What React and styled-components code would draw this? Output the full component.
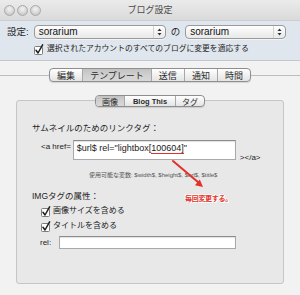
import React from 'react';
import styled, { createGlobalStyle } from 'styled-components';

const Global = createGlobalStyle`
  html, body { margin: 0; padding: 0; background: #f1f1f1; }
  body { font-family: "Liberation Sans", "Noto Sans CJK JP", sans-serif; }
`;

const Window = styled.div`
  position: relative;
  width: 300px;
  height: 295px;
  overflow: hidden;
  display: flex;
  flex-direction: column;
  background: #f2f2f2;
  font-family: "Liberation Sans", "Noto Sans CJK JP", sans-serif;
  color: #1b1b1b;
`;

const TitleBar = styled.div`
  height: 20px;
  flex: none;
  display: grid;
  grid-template-columns: 1fr auto 1fr;
  align-items: center;
  background: linear-gradient(#ebebeb, #dadada);
`;

const Lights = styled.div`
  display: flex;
  gap: 2px;
  padding-left: 4px;
`;

const Light = styled.span`
  width: 11px;
  height: 11px;
  box-sizing: border-box;
  border-radius: 50%;
  border: 1px solid #a9a9a9;
  background: radial-gradient(circle at 50% 35%, #f4f4f4 0%, #d6d6d6 55%, #bcbcbc 100%);
`;

const Title = styled.div`
  font-size: 9px;
  line-height: 12px;
  color: #4c4c4c;
`;

const Settings = styled.div`
  height: 41px;
  flex: none;
  box-sizing: border-box;
  background: #dfe6ee;
  border-top: 1px solid #c9ced4;
  border-bottom: 1px solid #c3c8ce;
  padding-top: 4px;
`;

const SettingRow = styled.div`
  display: flex;
  align-items: center;
  gap: 5px;
  padding-left: 7px;
  height: 14px;
`;

const Label = styled.span`
  font-size: ${p => p.size || 9.5}px;
  line-height: 12px;
  color: ${p => p.color || '#2a2a2a'};
  white-space: nowrap;
`;

const Select = styled.div`
  width: ${p => p.w}px;
  height: 14px;
  box-sizing: border-box;
  display: flex;
  align-items: center;
  border: 1px solid #9a9a9a;
  border-radius: 4px;
  background: linear-gradient(#ffffff, #f3f3f3 50%, #e9e9e9);
  box-shadow: 0 1px 0 rgba(255,255,255,0.6);
`;

const SelectText = styled.span`
  flex: 1;
  padding-left: 4px;
  font-size: 10px;
  line-height: 12px;
  color: #111;
`;

const Stepper = styled.span`
  width: 11px;
  height: 100%;
  display: flex;
  align-items: center;
  justify-content: center;
  border-left: 1px solid #d2d2d2;
`;

const CheckRow = styled.label`
  display: flex;
  align-items: center;
  gap: ${p => p.gap || 3}px;
  padding-left: ${p => p.indent}px;
  margin-top: ${p => p.top || 0}px;
  height: 12px;
`;

const CheckText = styled.span`
  font-size: ${p => p.size || 8}px;
  line-height: 12px;
  color: #222;
  white-space: nowrap;
`;

const Content = styled.div`
  flex: 1;
  display: flex;
  flex-direction: column;
`;

const TabLine = styled.div`
  display: flex;
  align-items: center;
  margin-top: 7px;
  height: 14px;
`;

const Rule = styled.div`
  flex: 1;
  height: 1px;
  background: #bdbdbd;
`;

const Segmented = styled.div`
  display: flex;
  height: ${p => p.h}px;
  box-sizing: border-box;
  border: 1px solid #8e8e8e;
  border-radius: 4px;
  overflow: hidden;
  background: linear-gradient(#ffffff, #f1f1f1 50%, #e4e4e4);
  box-shadow: 0 1px 1px rgba(0,0,0,0.12);
`;

const Segment = styled.div`
  display: flex;
  align-items: center;
  justify-content: center;
  padding: 0 ${p => p.pad}px;
  font-size: ${p => p.size}px;
  font-weight: ${p => (p.bold ? 700 : 400)};
  color: #2b2b2b;
  white-space: nowrap;
  background: ${p => (p.active ? 'linear-gradient(#c2c2c2, #d0d0d0 50%, #d8d8d8)' : 'transparent')};
  & + & { border-left: 1px solid #a8a8a8; }
`;

const Group = styled.div`
  margin: 18px 16px 11px;
  flex: 1;
  box-sizing: border-box;
  border: 1px solid #c6c6c6;
  border-radius: 3px;
  background: #e8e8e8;
  display: flex;
  flex-direction: column;
`;

const SubTabs = styled(Segmented)`
  align-self: center;
  margin-top: -6px;
`;

const Body = styled.div`
  display: flex;
  flex-direction: column;
  padding-left: 15px;
`;

const Heading = styled.div`
  font-size: 8.5px;
  line-height: 12px;
  color: #1f1f1f;
  margin-top: ${p => p.top}px;
  white-space: nowrap;
`;

const HrefRow = styled.div`
  display: flex;
  align-items: flex-start;
  margin-top: 6px;
  padding-left: 9px;
`;

const Code = styled.span`
  font-size: 8px;
  line-height: 12px;
  color: #222;
  margin-top: ${p => p.top || 0}px;
  white-space: nowrap;
`;

const Field = styled.div`
  width: ${p => p.w}px;
  height: ${p => p.h}px;
  box-sizing: border-box;
  margin: 0 ${p => p.right || 0}px 0 ${p => p.left || 0}px;
  background: #fff;
  border: 1px solid #a9a9a9;
  border-top-color: #8a8a8a;
  box-shadow: inset 0 1px 1px rgba(0,0,0,0.12);
  font-size: 9px;
  line-height: 11px;
  padding: 2px 3px;
  color: #1a1a1a;
  white-space: nowrap;
`;

const Marked = styled.span`
  border-bottom: 1.5px solid #e2302a;
`;

const Hint = styled.div`
  font-size: 6px;
  line-height: 8px;
  color: #555;
  margin-top: 7px;
  padding-left: 57px;
  white-space: nowrap;
`;

const RelRow = styled.div`
  display: flex;
  align-items: center;
  margin-top: 4px;
  padding-left: 8px;
`;

const Arrow = styled.svg`
  position: absolute;
  left: 170px;
  top: 157px;
`;

const Note = styled.div`
  position: absolute;
  left: 185px;
  top: 194px;
  font-size: 7px;
  line-height: 10px;
  font-weight: 700;
  letter-spacing: -0.3px;
  color: #e2352c;
  text-shadow: 1px 0 0 #fff, -1px 0 0 #fff, 0 1px 0 #fff, 0 -1px 0 #fff, 1px 1px 0 #fff, -1px -1px 0 #fff, 0 0 2px rgba(0,0,0,0.3);
  white-space: nowrap;
`;

const StepIcon = () => (
  <svg width="5" height="8" viewBox="0 0 5 8">
    <path d="M2.5 0.5 L4.5 3 L0.5 3 Z" fill="#333" />
    <path d="M2.5 7.5 L4.5 5 L0.5 5 Z" fill="#333" />
  </svg>
);

const CheckBox = () => (
  <svg width="10" height="11" viewBox="0 0 10 11">
    <rect x="0.5" y="2.5" width="8" height="8" rx="1" fill="#fff" stroke="#7d7d7d" />
    <path d="M2 6.3 L4 9 L8.6 0.8" fill="none" stroke="#1e1e1e" strokeWidth="1.5" strokeLinecap="round" strokeLinejoin="round" />
  </svg>
);

const tabs = ['編集', 'テンプレート', '送信', '通知', '時間'];
const subTabs = ['画像', 'Blog This', 'タグ'];

export default function App() {
  return (
    <Window>
      <Global />
      <TitleBar>
        <Lights>
          <Light />
          <Light />
          <Light />
        </Lights>
        <Title>ブログ設定</Title>
        <span />
      </TitleBar>

      <Settings>
        <SettingRow>
          <Label>設定:</Label>
          <Select w={132}>
            <SelectText>sorarium</SelectText>
            <Stepper><StepIcon /></Stepper>
          </Select>
          <Label size={9.5}>の</Label>
          <Select w={101}>
            <SelectText>sorarium</SelectText>
            <Stepper><StepIcon /></Stepper>
          </Select>
        </SettingRow>
        <CheckRow indent={34} top={4} gap={3}>
          <CheckBox />
          <CheckText size={7.8}>選択されたアカウントのすべてのブログに変更を適応する</CheckText>
        </CheckRow>
      </Settings>

      <Content>
        <TabLine>
          <Rule />
          <Segmented h={14}>
            {tabs.map(t => (
              <Segment key={t} pad={7} size={9} active={t === 'テンプレート'}>{t}</Segment>
            ))}
          </Segmented>
          <Rule />
        </TabLine>

        <Group>
          <SubTabs h={12}>
            {subTabs.map(t => (
              <Segment
                key={t}
                pad={t === 'Blog This' ? 8 : 6}
                size={t === 'Blog This' ? 7.5 : 8}
                bold={t === 'Blog This'}
                active={t === '画像'}
              >
                {t}
              </Segment>
            ))}
          </SubTabs>

          <Body>
            <Heading top={15}>サムネイルのためのリンクタグ：</Heading>
            <HrefRow>
              <Code top={1}>&lt;a href=</Code>
              <Field w={163} h={20} left={2} right={4}>
                $url$ rel="lightbox[<Marked>100604]</Marked>"
              </Field>
              <Code top={12}>&gt;&lt;/a&gt;</Code>
            </HrefRow>
            <Hint>使用可能な変数: $width$, $height$, $url$, $title$</Hint>

            <Heading top={11}>IMGタグの属性：</Heading>
            <CheckRow indent={9} top={3} gap={2}>
              <CheckBox />
              <CheckText>画像サイズを含める</CheckText>
            </CheckRow>
            <CheckRow indent={9} top={3} gap={2}>
              <CheckBox />
              <CheckText>タイトルを含める</CheckText>
            </CheckRow>
            <RelRow>
              <Code>rel:</Code>
              <Field w={177} h={13} left={8} />
            </RelRow>
          </Body>
        </Group>
      </Content>

      <Arrow width="40" height="35" viewBox="0 0 40 35">
        <line x1="3" y1="4" x2="28.5" y2="25.5" stroke="#e2302a" strokeWidth="2" strokeLinecap="round" />
        <polygon points="33,30 25,28.3 29.8,22.6" fill="#e2302a" />
      </Arrow>
      <Note>毎回変更する。</Note>
    </Window>
  );
}
